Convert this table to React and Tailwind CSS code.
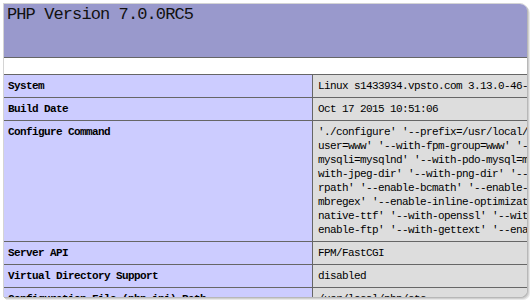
const rows = [
  { label: "System", value: ["Linux s1433934.vpsto.com 3.13.0-46-generic #79-Ubuntu SMP"] },
  { label: "Build Date", value: ["Oct 17 2015 10:51:06"] },
  {
    label: "Configure Command",
    value: [
      "'./configure' '--prefix=/usr/local/php' '--with-config-file-path",
      "user=www' '--with-fpm-group=www' '--with-mysql=mysqlnd' '--with-",
      "mysqli=mysqlnd' '--with-pdo-mysql=mysqlnd' '--with-iconv-dir'",
      "with-jpeg-dir' '--with-png-dir' '--with-zlib' '--with-libxml-dir",
      "rpath' '--enable-bcmath' '--enable-shmop' '--enable-sysvsem'",
      "mbregex' '--enable-inline-optimization' '--with-curl' '--enable-",
      "native-ttf' '--with-openssl' '--with-mhash' '--enable-pcntl' '--",
      "enable-ftp' '--with-gettext' '--enable-soap' '--disable-fileinfo'",
    ],
  },
  { label: "Server API", value: ["FPM/FastCGI"] },
  { label: "Virtual Directory Support", value: ["disabled"] },
  { label: "Configuration File (php.ini) Path", value: ["/usr/local/php/etc"] },
];

function App() {
  return (
    <div className="h-[300px] w-[530px] overflow-hidden bg-white">
      <div className="ml-[3px] mt-[3px] h-[294px] w-[524px] overflow-hidden rounded-tr-[7px] rounded-br-[7px] border-l border-t border-[#d4d4d4] shadow-[1px_1px_0_#b8b8b8,2px_2px_0_#d0d0d0,3px_3px_0_#e8e8e8] font-['Liberation_Mono',monospace] text-black">
        <div className="h-[54px] border-b border-[#666] bg-[#9999cc]">
          <h1 className="pl-[3px] pt-[1px] text-[17px] leading-[20px] tracking-[-0.9px] font-normal text-[#111]">
            PHP Version 7.0.0RC5
          </h1>
        </div>
        <div className="h-[16px] bg-white" />
        <div className="grid grid-cols-[309px_1fr] border-t border-[#666]">
          {rows.map((row) => (
            <div key={row.label} className="contents">
              <div className="border-b border-r border-[#666] bg-[#ccccff] px-[4px] py-[4px] text-[11px] font-bold leading-[14px] tracking-[-0.6px] whitespace-nowrap">
                {row.label}
              </div>
              <div className="overflow-hidden border-b border-[#666] bg-[#dddddd] px-[5px] py-[4px] text-[11px] leading-[14px] tracking-[-0.6px]">
                {row.value.map((line, i) => (
                  <div key={i} className="whitespace-nowrap">{line}</div>
                ))}
              </div>
            </div>
          ))}
        </div>
      </div>
    </div>
  );
}

export default App;
